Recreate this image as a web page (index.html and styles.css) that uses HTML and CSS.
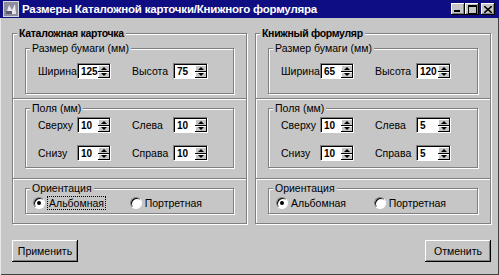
FILE: index.html
```html
<!DOCTYPE html>
<html lang="ru">
<head>
    <meta charset="UTF-8">
    <title>Размеры Каталожной карточки/Книжного формуляра</title>
    <link rel="stylesheet" href="styles.css">
</head>
<body>
    <div class="window">
        <div class="titlebar">
            <svg class="app-icon" width="16" height="16" viewBox="0 0 16 16">
                <rect x="0.5" y="0.5" width="15" height="15" fill="#8c8c9c" stroke="#d8d8e0"/>
                <path d="M3 13 L6 4 L9 9 L12 3 L13 13 Z" fill="#e8e8ee"/>
                <rect x="3" y="10" width="6" height="3" fill="#5a5a6a"/>
            </svg>
            <span class="title">Размеры Каталожной карточки/Книжного формуляра</span>
            <div class="caption-buttons">
                <span class="cap-btn minimize"></span>
                <span class="cap-btn maximize"></span>
                <span class="cap-btn close">
                    <svg width="8" height="7" viewBox="0 0 8 7"><path d="M0 0 L8 7 M8 0 L0 7" stroke="#000" stroke-width="1.6"/></svg>
                </span>
            </div>
        </div>

        <div class="client">
            <div class="panels">
                <fieldset class="group">
                    <legend class="group-title">Каталожная карточка</legend>
                    <div class="section first">
                        <fieldset class="box">
                            <legend>Размер бумаги (мм)</legend>
                            <div class="fields">
                                <span class="label">Ширина</span>
                                <span class="spin"><span class="value">125</span><span class="arrows"><span class="up"></span><span class="down"></span></span></span>
                                <span></span>
                                <span class="label">Высота</span>
                                <span class="spin"><span class="value">75</span><span class="arrows"><span class="up"></span><span class="down"></span></span></span>
                            </div>
                        </fieldset>
                    </div>
                    <div class="section second">
                        <fieldset class="box">
                            <legend>Поля (мм)</legend>
                            <div class="fields">
                                <span class="label">Сверху</span>
                                <span class="spin"><span class="value">10</span><span class="arrows"><span class="up"></span><span class="down"></span></span></span>
                                <span></span>
                                <span class="label">Слева</span>
                                <span class="spin"><span class="value">10</span><span class="arrows"><span class="up"></span><span class="down"></span></span></span>

                                <span class="label">Снизу</span>
                                <span class="spin"><span class="value">10</span><span class="arrows"><span class="up"></span><span class="down"></span></span></span>
                                <span></span>
                                <span class="label">Справа</span>
                                <span class="spin"><span class="value">10</span><span class="arrows"><span class="up"></span><span class="down"></span></span></span>
                            </div>
                        </fieldset>
                    </div>
                    <div class="section third">
                        <fieldset class="box">
                            <legend>Ориентация</legend>
                            <div class="radios">
                                <span class="option"><span class="radio checked"></span><span class="focused">Альбомная</span></span>
                                <span class="option"><span class="radio"></span><span>Портретная</span></span>
                            </div>
                        </fieldset>
                    </div>
                </fieldset>

                <fieldset class="group">
                    <legend class="group-title">Книжный формуляр</legend>
                    <div class="section first">
                        <fieldset class="box">
                            <legend>Размер бумаги (мм)</legend>
                            <div class="fields">
                                <span class="label">Ширина</span>
                                <span class="spin"><span class="value">65</span><span class="arrows"><span class="up"></span><span class="down"></span></span></span>
                                <span></span>
                                <span class="label">Высота</span>
                                <span class="spin"><span class="value">120</span><span class="arrows"><span class="up"></span><span class="down"></span></span></span>
                            </div>
                        </fieldset>
                    </div>
                    <div class="section second">
                        <fieldset class="box">
                            <legend>Поля (мм)</legend>
                            <div class="fields">
                                <span class="label">Сверху</span>
                                <span class="spin"><span class="value">10</span><span class="arrows"><span class="up"></span><span class="down"></span></span></span>
                                <span></span>
                                <span class="label">Слева</span>
                                <span class="spin"><span class="value">5</span><span class="arrows"><span class="up"></span><span class="down"></span></span></span>

                                <span class="label">Снизу</span>
                                <span class="spin"><span class="value">10</span><span class="arrows"><span class="up"></span><span class="down"></span></span></span>
                                <span></span>
                                <span class="label">Справа</span>
                                <span class="spin"><span class="value">5</span><span class="arrows"><span class="up"></span><span class="down"></span></span></span>
                            </div>
                        </fieldset>
                    </div>
                    <div class="section third">
                        <fieldset class="box">
                            <legend>Ориентация</legend>
                            <div class="radios">
                                <span class="option"><span class="radio checked"></span><span>Альбомная</span></span>
                                <span class="option"><span class="radio"></span><span>Портретная</span></span>
                            </div>
                        </fieldset>
                    </div>
                </fieldset>
            </div>

            <div class="actions">
                <button class="btn">Применить</button>
                <button class="btn">Отменить</button>
            </div>
        </div>
    </div>
</body>
</html>
```

FILE: styles.css
```css
* {
    margin: 0;
    padding: 0;
    box-sizing: border-box;
}

body {
    width: 499px;
    height: 275px;
    overflow: hidden;
    background: #c6c6c6;
    font-family: "Liberation Sans", Arial, sans-serif;
    font-size: 10.5px;
    color: #000;
}

.window {
    width: 499px;
    height: 275px;
    background: #c6c6c6;
    box-shadow: inset 1px 0 0 #e8e8e8, inset -1px -1px 0 #404040;
}

/* title bar */
.titlebar {
    height: 18px;
    background: #0e0e82;
    display: flex;
    align-items: center;
    padding-left: 3px;
}

.app-icon {
    flex: none;
}

.title {
    margin-left: 3px;
    color: #fff;
    font-weight: bold;
    font-size: 11.5px;
    white-space: nowrap;
    letter-spacing: -0.2px;
}

.caption-buttons {
    margin-left: auto;
    margin-right: 4px;
    display: flex;
}

.cap-btn {
    width: 14px;
    height: 12px;
    background: #c6c6c6;
    box-shadow: inset -1px -1px 0 #000, inset 1px 1px 0 #fff, inset -2px -2px 0 #808080;
    display: flex;
    align-items: center;
    justify-content: center;
    position: relative;
}

.cap-btn.close {
    margin-left: 2px;
}

.minimize::after {
    content: "";
    position: absolute;
    left: 3px;
    bottom: 3px;
    width: 6px;
    height: 2px;
    background: #000;
}

.maximize::after {
    content: "";
    width: 7px;
    height: 6px;
    border: 1px solid #000;
    border-top-width: 2px;
}

/* client area */
.client {
    padding: 9px 8px 0 12px;
}

.panels {
    display: flex;
    gap: 8px;
}

fieldset {
    border: 1px solid #808080;
    box-shadow: 1px 1px 0 #fff, inset 1px 1px 0 #fff;
    min-width: 0;
}

legend {
    line-height: 13px;
    padding: 0 2px;
    margin-left: 4px;
    background: #c6c6c6;
}

.group {
    width: 235px;
}

.group + .group {
    width: 236px;
}

.group-title {
    font-weight: bold;
    font-size: 10.5px;
    letter-spacing: -0.3px;
}

.section {
    padding: 0 12px;
}

.section + .section {
    border-top: 1px solid #808080;
    box-shadow: inset 0 1px 0 #fff;
}

.section.first {
    padding-top: 2px;
    padding-bottom: 4px;
}

.section.second {
    padding-top: 3px;
    padding-bottom: 10px;
}

.section.third {
    padding-top: 3px;
    padding-bottom: 9px;
}

.first .fields {
    padding: 8px 0 14px 12px;
}

.second .fields {
    padding: 2px 0 6px 12px;
    row-gap: 12px;
}

.fields {
    display: grid;
    grid-template-columns: 39px 34px 21px 41px 35px;
    align-items: center;
}

.label {
    white-space: nowrap;
}

/* spin edit */
.spin {
    height: 16px;
    display: flex;
    background: #fff;
    border-top: 1px solid #808080;
    border-left: 1px solid #808080;
    border-right: 1px solid #fff;
    border-bottom: 1px solid #fff;
    box-shadow: inset 1px 1px 0 #000;
}

.value {
    flex: 1;
    padding: 1px 0 0 3px;
    line-height: 13px;
    font-size: 10px;
    font-weight: bold;
}

.arrows {
    width: 12px;
    margin: 1px 0 0 0;
    display: flex;
    flex-direction: column;
}

.arrows span {
    flex: 1;
    background: #c6c6c6;
    box-shadow: inset -1px -1px 0 #000, inset 1px 1px 0 #fff;
    display: flex;
    align-items: center;
    justify-content: center;
}

.up::after {
    content: "";
    border-left: 3px solid transparent;
    border-right: 3px solid transparent;
    border-bottom: 3px solid #000;
}

.down::after {
    content: "";
    border-left: 3px solid transparent;
    border-right: 3px solid transparent;
    border-top: 3px solid #000;
}

/* orientation radios */
.radios {
    display: flex;
    padding: 1px 0 4px 7px;
}

.option {
    display: flex;
    align-items: center;
    gap: 3px;
    height: 13px;
}

.option + .option {
    margin-left: auto;
    margin-right: 31px;
}

.radio {
    width: 12px;
    height: 12px;
    border-radius: 50%;
    background: #fff;
    border: 1px solid;
    border-color: #808080 #fff #fff #808080;
    box-shadow: inset 1px 1px 0 #000;
    display: flex;
    align-items: center;
    justify-content: center;
}

.radio.checked::after {
    content: "";
    width: 4px;
    height: 4px;
    border-radius: 50%;
    background: #000;
}

.focused {
    outline: 1px dotted #000;
    outline-offset: 0;
    padding: 0 1px;
}

/* bottom buttons */
.actions {
    display: flex;
    justify-content: space-between;
    margin-top: 16px;
}

.btn {
    width: 66px;
    height: 22px;
    font-family: "Liberation Sans", Arial, sans-serif;
    font-size: 10.5px;
    background: #c6c6c6;
    border: none;
    box-shadow: inset -1px -1px 0 #000, inset 1px 1px 0 #fff, inset -2px -2px 0 #808080;
}
```
